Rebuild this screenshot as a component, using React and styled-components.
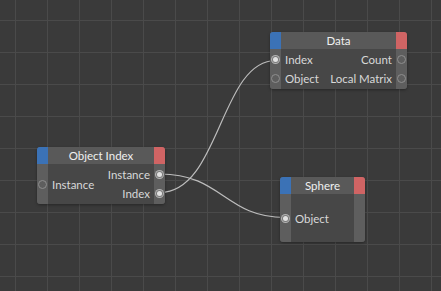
import React from "react";
import styled, { createGlobalStyle } from "styled-components";

const Global = createGlobalStyle`
  html, body { margin: 0; padding: 0; background: #393939; }
  #root { width: 441px; height: 291px; }
`;

const Canvas = styled.div`
  position: relative;
  width: 441px;
  height: 291px;
  overflow: hidden;
  background-color: #3a3a3a;
  background-image:
    linear-gradient(#4a4a4a 1px, transparent 1px),
    linear-gradient(90deg, #4a4a4a 1px, transparent 1px);
  background-size: 32px 32px;
  background-position: 15px 20px;
  font-family: Lato, "Noto Sans", sans-serif;
`;

const Wires = styled.svg`
  position: absolute;
  inset: 0;
  width: 441px;
  height: 291px;
`;

const Node = styled.div`
  position: absolute;
  left: ${(p) => p.$x}px;
  top: ${(p) => p.$y}px;
  width: ${(p) => p.$w}px;
  display: flex;
  flex-direction: column;
  border-radius: 3px;
  overflow: hidden;
  box-shadow: 0 1px 3px rgba(0, 0, 0, 0.35);
`;

const Header = styled.div`
  display: grid;
  grid-template-columns: 11px 1fr 11px;
  height: 17px;
  background: #595959;
`;

const Cap = styled.div`
  background: ${(p) => (p.$side === "left" ? "#3b72b6" : "#d06464")};
`;

const Title = styled.div`
  display: flex;
  align-items: center;
  justify-content: center;
  color: #f0f0f0;
  font-size: 11.5px;
  line-height: 17px;
  white-space: nowrap;
`;

const Body = styled.div`
  display: grid;
  grid-template-columns: 11px auto 1fr 11px;
  height: ${(p) => p.$h}px;
  background: #474747;
`;

const Rail = styled.div`
  display: flex;
  flex-direction: column;
  justify-content: center;
  background: #5e5e5e;
`;

const Labels = styled.div`
  display: flex;
  flex-direction: column;
  justify-content: center;
  align-items: ${(p) => (p.$right ? "flex-end" : "flex-start")};
  padding: ${(p) => (p.$right ? "0 4px 0 0" : "0 0 0 4px")};
`;

const Label = styled.div`
  height: 19px;
  line-height: 19px;
  font-size: 11.5px;
  color: #d8d8d8;
  white-space: nowrap;
`;

const Slot = styled.div`
  height: 19px;
  display: flex;
  align-items: center;
  justify-content: center;
`;

const Port = styled.div`
  box-sizing: border-box;
  border-radius: 50%;
  width: ${(p) => (p.$on ? 5 : 9)}px;
  height: ${(p) => (p.$on ? 5 : 9)}px;
  background: ${(p) => (p.$on ? "#e2e2e2" : "transparent")};
  border: ${(p) => (p.$on ? "none" : "1px solid #8e8e8e")};
  box-shadow: ${(p) =>
    p.$on ? "0 0 0 1px #7a7a7a, 0 0 0 2px #b4b4b4" : "none"};
`;

function GraphNode({ x, y, w, h, title, inputs, outputs }) {
  return (
    <Node $x={x} $y={y} $w={w}>
      <Header>
        <Cap $side="left" />
        <Title>{title}</Title>
        <Cap $side="right" />
      </Header>
      <Body $h={h}>
        <Rail>
          {inputs.map((p) => (
            <Slot key={p.name}>
              <Port $on={p.on} />
            </Slot>
          ))}
        </Rail>
        <Labels>
          {inputs.map((p) => (
            <Label key={p.name}>{p.name}</Label>
          ))}
        </Labels>
        <Labels $right>
          {outputs.map((p) => (
            <Label key={p.name}>{p.name}</Label>
          ))}
        </Labels>
        <Rail>
          {outputs.map((p) => (
            <Slot key={p.name}>
              <Port $on={p.on} />
            </Slot>
          ))}
        </Rail>
      </Body>
    </Node>
  );
}

export default function App() {
  return (
    <>
      <Global />
      <Canvas>
        <Wires viewBox="0 0 441 291">
          <path
            d="M160 192.5 C220 192.5 220 60.5 276 60.5"
            fill="none"
            stroke="#bdbdbd"
            strokeWidth="1.2"
          />
          <path
            d="M160 174 C222 174 225 217.5 285 217.5"
            fill="none"
            stroke="#bdbdbd"
            strokeWidth="1.2"
          />
        </Wires>
        <GraphNode
          x={270}
          y={32}
          w={137}
          h={40}
          title="Data"
          inputs={[
            { name: "Index", on: true },
            { name: "Object", on: false },
          ]}
          outputs={[
            { name: "Count", on: false },
            { name: "Local Matrix", on: false },
          ]}
        />
        <GraphNode
          x={37}
          y={147}
          w={128}
          h={40}
          title="Object Index"
          inputs={[{ name: "Instance", on: false }]}
          outputs={[
            { name: "Instance", on: true },
            { name: "Index", on: true },
          ]}
        />
        <GraphNode
          x={280}
          y={177}
          w={85}
          h={48}
          title="Sphere"
          inputs={[{ name: "Object", on: true }]}
          outputs={[]}
        />
      </Canvas>
    </>
  );
}
